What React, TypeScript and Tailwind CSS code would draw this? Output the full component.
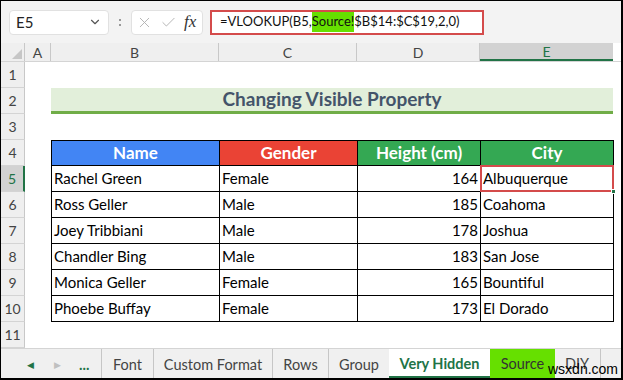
import { ChevronDown, X, Check } from "lucide-react";

const rows = [
  { name: "Rachel Green", gender: "Female", height: 164, city: "Albuquerque" },
  { name: "Ross Geller", gender: "Male", height: 185, city: "Coahoma" },
  { name: "Joey Tribbiani", gender: "Male", height: 178, city: "Joshua" },
  { name: "Chandler Bing", gender: "Male", height: 183, city: "San Jose" },
  { name: "Monica Geller", gender: "Female", height: 165, city: "Bountiful" },
  { name: "Phoebe Buffay", gender: "Female", height: 173, city: "El Dorado" },
];

const font = { fontFamily: "Lato, 'Open Sans', sans-serif" };

function RowHead({ n, active }: { n: number; active?: boolean }) {
  return (
    <div
      className={
        "w-[24px] shrink-0 flex items-center justify-center border-b border-[#d4d4d4] text-[14px] " +
        (active
          ? "bg-[#d2d2d2] text-[#217346] border-r-2 border-r-[#217346]"
          : "bg-[#efefef] text-[#444] border-r border-r-[#c8c8c8]")
      }
    >
      {n}
    </div>
  );
}

export default function App() {
  return (
    <div
      className="w-[623px] h-[380px] bg-black pt-[1px] pl-[1px] pr-[2px] pb-[2px] overflow-hidden"
      style={font}
    >
      <div className="w-full h-full bg-white flex flex-col">
        {/* Formula bar */}
        <div className="h-[42px] shrink-0 bg-[#f3f3f3] flex items-center pl-[8px]">
          <div className="w-[100px] h-[25px] bg-white rounded-[4px] border border-[#e1e1e1] flex items-center justify-between pl-[6px] pr-[6px] text-[15px] text-[#222]">
            <span>E5</span>
            <ChevronDown size={14} className="text-[#555]" />
          </div>
          <div className="w-[22px] flex flex-col items-center gap-[3px]">
            <span className="w-[2px] h-[2px] bg-[#999]" />
            <span className="w-[2px] h-[2px] bg-[#999]" />
          </div>
          <div className="w-[72px] h-[25px] bg-white rounded-[4px] border border-[#e1e1e1] flex items-center pl-[4px] gap-[7px]">
            <X size={17} strokeWidth={1.3} className="text-[#b0b0b0]" />
            <Check size={17} strokeWidth={1.3} className="text-[#b0b0b0]" />
            <span className="text-[17px] italic text-[#333]" style={{ fontFamily: "'Liberation Serif', serif" }}>
              fx
            </span>
          </div>
          <div className="ml-[7px] w-[274px] h-[25px] bg-white border-2 border-[#d44b4b] flex items-center pl-[8px] text-[13px] text-[#111] whitespace-nowrap">
            <span>=VLOOKUP(B5,</span>
            <span className="bg-[#66e000]">Source!</span>
            <span>$B$14:$C$19,2,0)</span>
          </div>
        </div>

        {/* Column headers */}
        <div className="h-[19px] shrink-0 flex text-[14px] text-[#444] bg-[#efefef] border-b border-[#d4d4d4]">
          <div className="w-[24px] shrink-0 border-r border-[#c8c8c8] flex items-end justify-end pr-[2px] pb-[2px]">
            <div className="w-0 h-0 border-l-[10px] border-l-transparent border-b-[10px] border-b-[#c6c6c6]" />
          </div>
          <div className="w-[26px] border-r border-[#c8c8c8] flex items-center justify-center">A</div>
          <div className="w-[168px] border-r border-[#c8c8c8] flex items-center justify-center">B</div>
          <div className="w-[138px] border-r border-[#c8c8c8] flex items-center justify-center">C</div>
          <div className="w-[123px] border-r border-[#c8c8c8] flex items-center justify-center">D</div>
          <div className="w-[133px] bg-[#d2d2d2] border-b-2 border-[#217346] text-[#217346] flex items-center justify-center">E</div>
          <div className="flex-1 bg-white" />
        </div>

        {/* Rows */}
        <div className="flex flex-col text-[15px] text-black">
          <div className="h-[26px] flex"><RowHead n={1} /></div>
          <div className="h-[26px] flex">
            <RowHead n={2} />
            <div className="w-[26px]" />
            <div className="w-[562px] bg-[#e2efda] border-b-[3px] border-[#70ad47] flex items-center justify-center text-[19px] font-bold text-[#44546a]">
              Changing Visible Property
            </div>
          </div>
          <div className="h-[26px] flex"><RowHead n={3} /></div>
          <div className="h-[26px] flex">
            <RowHead n={4} />
            <div className="w-[26px]" />
            <div className="w-[563px] flex border border-black text-white font-bold text-[17px]">
              <div className="w-[168px] bg-[#4285f4] border-r border-black flex items-center justify-center">Name</div>
              <div className="w-[138px] bg-[#ea4335] border-r border-black flex items-center justify-center">Gender</div>
              <div className="w-[123px] bg-[#34a853] border-r border-black flex items-center justify-center">Height (cm)</div>
              <div className="flex-1 bg-[#34a853] flex items-center justify-center">City</div>
            </div>
          </div>
          {rows.map((r, i) => (
            <div key={r.name} className="h-[26px] flex">
              <RowHead n={5 + i} active={i === 0} />
              <div className="w-[26px]" />
              <div className="w-[563px] flex border-x border-b border-black">
                <div className="w-[168px] border-r border-black flex items-center pl-[2px]">{r.name}</div>
                <div className="w-[138px] border-r border-black flex items-center pl-[2px]">{r.gender}</div>
                <div className="w-[123px] border-r border-black flex items-center justify-end pr-[2px]">{r.height}</div>
                <div className="relative flex-1 flex items-center pl-[2px]">
                  {r.city}
                  {i === 0 && (
                    <div className="absolute -left-[1px] -top-[1px] -right-[1px] bottom-[-1px] border-2 border-[#d44b4b]">
                      <div className="absolute -right-[4px] -bottom-[4px] w-[5px] h-[5px] bg-[#217346] border border-white" />
                    </div>
                  )}
                </div>
              </div>
            </div>
          ))}
          <div className="h-[26px] flex"><RowHead n={11} /></div>
        </div>

        {/* Sheet tabs */}
        <div className="flex-1 flex items-stretch bg-[#f0f0f0] border-t border-[#d4d4d4] text-[14.5px] text-[#444] whitespace-nowrap">
          <div className="w-[100px] shrink-0 flex items-center pl-[26px] pt-[3px]">
            <span className="text-[9px] text-[#217346]">◀</span>
            <span className="ml-[20px] text-[9px] text-[#c0c0c0]">▶</span>
            <span className="ml-[18px] font-bold text-[#217346] leading-none">...</span>
          </div>
          <div className="w-[52px] shrink-0 flex items-center justify-center pt-[3px] border-l border-[#c6c6c6]">Font</div>
          <div className="w-[119px] shrink-0 flex items-center justify-center pt-[3px] border-l border-[#c6c6c6]">Custom Format</div>
          <div className="w-[56px] shrink-0 flex items-center justify-center pt-[3px] border-l border-[#c6c6c6]">Rows</div>
          <div className="w-[61px] shrink-0 flex items-center justify-center pt-[3px] border-l border-[#c6c6c6]">Group</div>
          <div className="w-[101px] shrink-0 flex items-center justify-center pt-[3px] bg-white border-b-2 border-[#217346] font-bold text-[#217346]">Very Hidden</div>
          <div className="w-[65px] shrink-0 flex items-center justify-center pt-[1px] bg-[#66e000] text-[#333]">Source</div>
          <div className="relative w-[46px] shrink-0 flex items-center pl-[10px] pt-[1px] border-r border-[#c6c6c6]">
            DIY
            <span className="absolute left-[-7px] top-[13px] text-[14px] leading-none text-black" style={{ fontFamily: "'Liberation Sans', sans-serif" }}>
              wsxdn.com
            </span>
          </div>
        </div>
      </div>
    </div>
  );
}
